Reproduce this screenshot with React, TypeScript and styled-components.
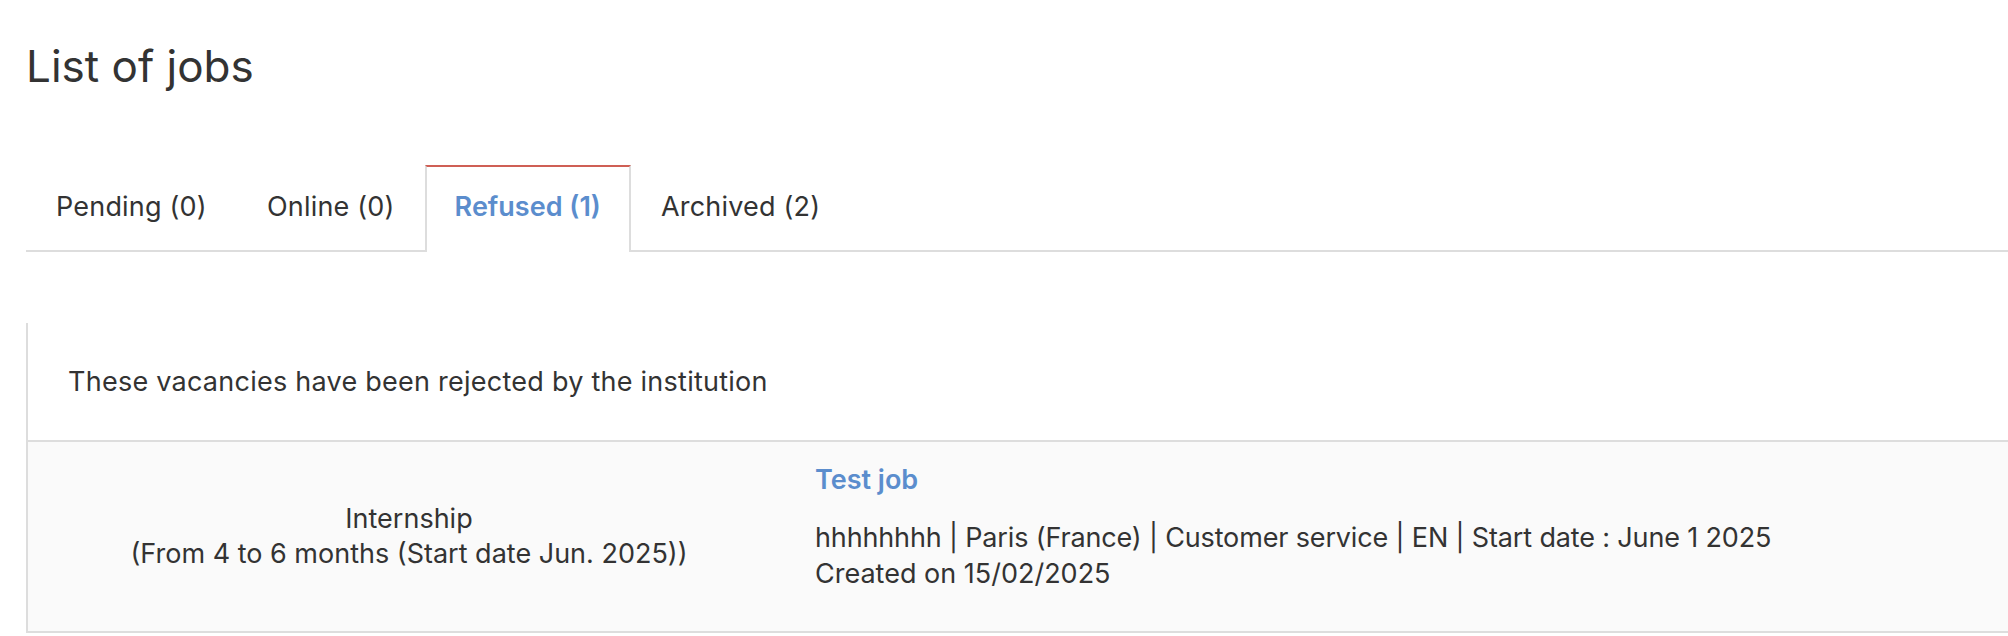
import React from "react";
import styled, { createGlobalStyle } from "styled-components";

const GlobalStyle = createGlobalStyle`
  html, body {
    margin: 0;
    padding: 0;
    background: #ffffff;
  }
  body {
    font-family: "Inter", "Liberation Sans", sans-serif;
    color: #333333;
    overflow: hidden;
  }
  * { box-sizing: border-box; }
`;

const Page = styled.main`
  padding: 40px 0 0 26px;
`;

const Title = styled.h1`
  margin: 0;
  font-size: 44px;
  line-height: 52px;
  font-weight: 400;
  color: #333333;
`;

const TabBar = styled.nav`
  margin-top: 73px;
  display: flex;
  border-bottom: 2px solid #dddddd;
`;

const Tab = styled.button<{ $active?: boolean }>`
  height: 87px;
  margin-bottom: -2px;
  padding: 22px 28px 0;
  border: 2px solid ${(p) => (p.$active ? "#dddddd" : "transparent")};
  border-top-color: ${(p) => (p.$active ? "#cf5f55" : "transparent")};
  border-bottom: none;
  background: ${(p) => (p.$active ? "#ffffff" : "transparent")};
  font-family: inherit;
  font-size: 27px;
  line-height: 35px;
  letter-spacing: ${(p) => (p.$active ? "0" : "0.2px")};
  font-weight: ${(p) => (p.$active ? 600 : 400)};
  color: ${(p) => (p.$active ? "#5b8dcd" : "#333333")};
  display: flex;
  align-items: flex-start;
  cursor: pointer;
`;

const Panel = styled.section`
  margin-top: 71px;
  border-left: 2px solid #dddddd;
  border-bottom: 2px solid #dddddd;
`;

const PanelHeader = styled.div`
  padding: 41px 40px 41px;
  font-size: 27px;
  line-height: 35px;
  letter-spacing: 0.25px;
  border-bottom: 2px solid #dddddd;
  background: #ffffff;
`;

const JobRow = styled.div`
  display: grid;
  grid-template-columns: 762px 1fr;
  height: 189px;
  background: #fafafa;
`;

const ContractCell = styled.div`
  display: flex;
  flex-direction: column;
  justify-content: center;
  align-items: center;
  text-align: center;
  padding-bottom: 2px;
  font-size: 27px;
  line-height: 35px;
`;

const InfoCell = styled.div`
  padding: 20px 0 0 25px;
  font-size: 27px;
  line-height: 36px;
`;

const JobLink = styled.a`
  display: block;
  font-weight: 600;
  color: #5b8dcd;
  text-decoration: none;
  margin-bottom: 22px;
  cursor: pointer;
`;

const Meta = styled.div<{ $tight?: boolean }>`
  white-space: nowrap;
  letter-spacing: ${(p) => (p.$tight ? "-0.15px" : "0")};
`;

const tabs = [
  { label: "Pending (0)" },
  { label: "Online (0)" },
  { label: "Refused (1)", active: true },
  { label: "Archived (2)" },
];

export default function App() {
  return (
    <>
      <GlobalStyle />
      <Page>
        <Title>List of jobs</Title>
        <TabBar>
          {tabs.map((t) => (
            <Tab key={t.label} $active={t.active}>
              {t.label}
            </Tab>
          ))}
        </TabBar>
        <Panel>
          <PanelHeader>These vacancies have been rejected by the institution</PanelHeader>
          <JobRow>
            <ContractCell>
              <div>Internship</div>
              <div>(From 4 to 6 months (Start date Jun. 2025))</div>
            </ContractCell>
            <InfoCell>
              <JobLink>Test job</JobLink>
              <Meta $tight>hhhhhhhh | Paris (France) | Customer service | EN | Start date : June 1 2025</Meta>
              <Meta>Created on 15/02/2025</Meta>
            </InfoCell>
          </JobRow>
        </Panel>
      </Page>
    </>
  );
}
